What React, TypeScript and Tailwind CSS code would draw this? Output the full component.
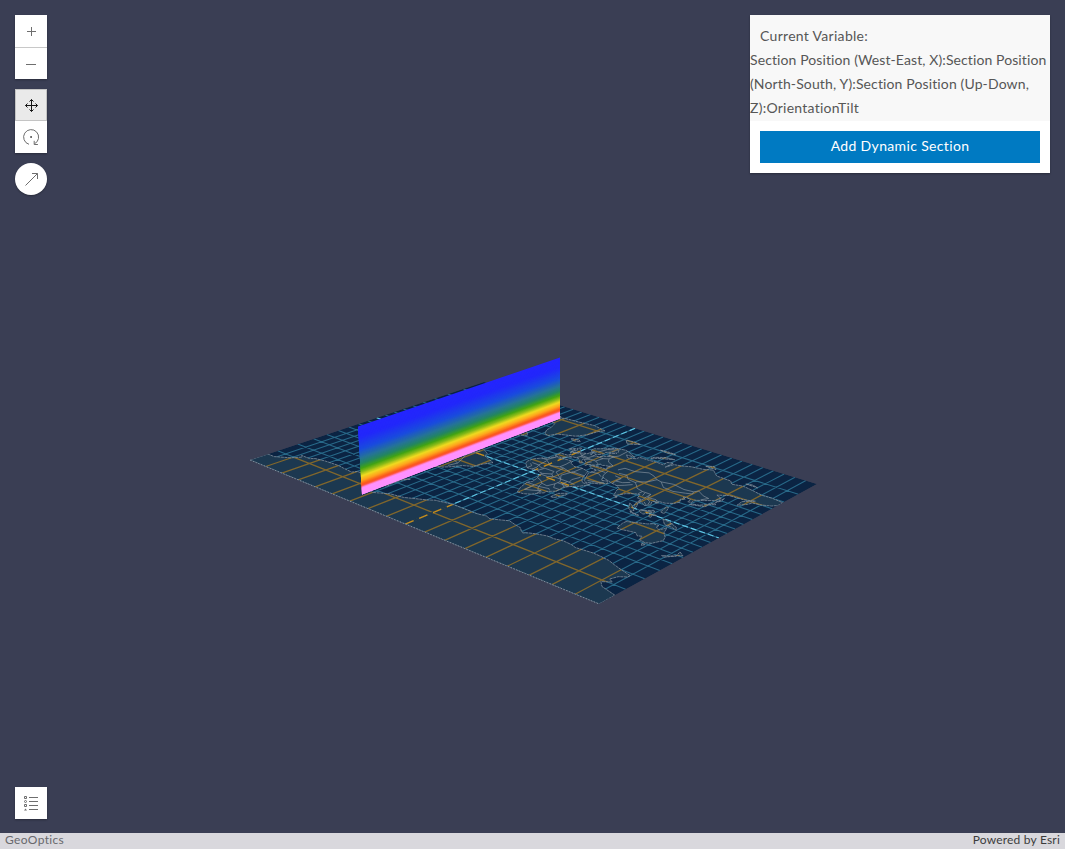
import type { ReactNode } from "react";

type Pt = [number, number];

// Scene corners of the ground plane: south-west, south-east, north-east, north-west.
const SW: Pt = [250, 460];
const SE: Pt = [599, 604];
const NE: Pt = [817, 484];
const NW: Pt = [484, 382];

const dx1 = SE[0] - NE[0];
const dx2 = NW[0] - NE[0];
const sx = SW[0] - SE[0] + NE[0] - NW[0];
const dy1 = SE[1] - NE[1];
const dy2 = NW[1] - NE[1];
const sy = SW[1] - SE[1] + NE[1] - NW[1];
const det = dx1 * dy2 - dx2 * dy1;
const g = (sx * dy2 - dx2 * sy) / det;
const h = (dx1 * sy - sx * dy1) / det;

function plane(s: number, t: number): Pt {
  const w = 1 + g * s + h * t;
  const x = SW[0] + (SE[0] - SW[0] + g * SE[0]) * s + (NW[0] - SW[0] + h * NW[0]) * t;
  const y = SW[1] + (SE[1] - SW[1] + g * SE[1]) * s + (NW[1] - SW[1] + h * NW[1]) * t;
  return [x / w, y / w];
}

// Miller cylindrical projection, then perspective.
function project(lon: number, lat: number): Pt {
  const y = 1.25 * Math.log(Math.tan(Math.PI / 4 + (0.4 * lat * Math.PI) / 180));
  return plane((lon + 180) / 360, 0.5 + y / 4.6068);
}

function path(coords: number[], close = true): string {
  const out: string[] = [];
  for (let i = 0; i < coords.length; i += 2) {
    const [x, y] = project(coords[i], coords[i + 1]);
    out.push(`${x.toFixed(1)} ${y.toFixed(1)}`);
  }
  return `M${out.join("L")}${close ? "Z" : ""}`;
}

const land: number[][] = [
  // Antarctica
  [-180, -90, -180, -84, -172, -84, -160, -81, -155, -78, -158, -77, -148, -77, -145, -75.5, -135, -74.5, -120, -74, -113, -74.5, -102, -75, -100, -73, -90, -73, -80, -73.5, -75, -72, -69, -70, -67, -67, -62, -65, -58, -63, -62, -67, -62, -72, -61, -75, -70, -77, -78, -79, -68, -81, -60, -82, -48, -79, -36, -78, -28, -76, -20, -74, -15, -72, -8, -71, 0, -70, 8, -70, 15, -70, 25, -70, 33, -69, 38, -70, 45, -68, 51, -66, 57, -67, 65, -68, 69, -70, 72, -71, 75, -69.5, 80, -68, 88, -66.5, 95, -66.5, 102, -65.5, 110, -66, 115, -67, 122, -66.5, 130, -66, 137, -66.3, 145, -67, 152, -68.5, 160, -70, 170, -71.5, 170, -73, 165, -75, 163, -78, 167, -79, 161, -81, 166, -83, 180, -84.5, 180, -90],
  // Africa
  [-17, 15, -16, 12, -13, 9, -8, 4.5, -3, 5, 2, 6, 6, 4, 9, 4, 9, 0, 12, -5, 13, -9, 14, -13, 12, -17, 15, -27, 18, -32, 19, -34.5, 25, -34, 30, -31, 33, -26, 35.5, -23, 35, -20, 40, -15, 40, -10, 39, -6, 42, -1, 47, 4, 51, 11.5, 44, 11, 40, 15, 37, 20, 35, 25, 32.5, 30, 29, 31, 24, 32, 20, 31, 19, 30.3, 15, 32, 11, 34, 10, 37, 3, 37, -2, 35, -6, 36, -9, 32, -10, 29, -13, 27, -17, 21],
  // Eurasia
  [-9, 37, -9, 43, -2, 43.5, -1, 46, -4.5, 48.5, 2, 51, 5, 53, 8, 54, 8, 57, 10.5, 57.5, 10, 54.5, 14, 54, 19, 54.5, 21, 57, 24, 58.5, 29, 60, 23, 60, 21, 62, 25, 65, 22, 66, 17, 62, 18, 60, 15, 56, 12.5, 56, 11, 59, 7, 58, 5, 60, 5, 62, 12, 66, 18, 70, 26, 71, 31, 70, 41, 67, 33, 66.5, 38, 64, 44, 66, 44, 68.5, 54, 68.5, 61, 69, 68, 68.5, 67, 72, 72, 73, 72, 67, 74, 72, 80, 73, 87, 75, 97, 76, 104, 78, 113, 74, 127, 73.5, 131, 71, 140, 72.5, 152, 71, 160, 69.7, 170, 70, 180, 69, 180, 65, 177, 62.5, 170, 60, 163, 59, 162, 56, 157, 51, 156, 57, 163, 62, 155, 59.5, 142, 59, 135, 55, 141, 53, 140, 48, 133, 43, 128, 40, 129, 35.5, 126, 35, 125, 39, 121, 40, 118, 39, 122, 37, 119, 35, 122, 31, 120, 26, 115, 22.5, 108, 21.5, 106, 18, 109, 13, 106, 9, 103, 11, 100, 13, 100, 9, 103, 4, 103.5, 1.4, 101, 3, 98.5, 8, 97.5, 16, 94, 16, 91, 22.5, 87, 21, 82, 16.5, 80, 12, 77.5, 8, 73, 17, 72, 21, 67, 24, 61, 25, 57, 26.5, 51, 28, 48, 30, 52, 24, 56.5, 26, 59.5, 22.5, 55, 17.5, 45, 13, 42.5, 15, 39, 21, 35, 28, 36, 36, 30, 36.5, 27, 38, 27, 40.5, 35, 42, 41, 41.5, 38, 45, 39, 47, 34, 46, 33, 45, 30, 46, 28, 42, 26, 41, 23, 40, 23, 37, 21, 38, 19, 42, 13, 45.5, 14, 42, 18, 40, 16, 38, 12, 42, 9, 44, 4, 43.5, 0, 40, -2, 37],
  // Australia
  [114, -22, 114, -26, 116, -34, 120, -34, 124, -33, 131, -31.5, 135, -34.5, 138, -33, 140, -38, 146, -39, 150, -37, 153.5, -29, 151, -24, 146, -19, 142.5, -11, 140.5, -17.5, 136, -15, 136, -12, 131, -12, 128, -15, 122, -18],
  // Greenland
  [-73, 78, -68, 76, -58, 75, -54, 70, -53, 66, -48, 61, -43, 60, -40, 65, -25, 69, -20, 74, -18, 80, -15, 82, -30, 83.5, -45, 82.5, -60, 82],
  // South America
  [-78, 8, -72, 12, -62, 10.5, -52, 5, -50, 0, -44, -2.5, -35, -6, -39, -14, -41, -22, -48, -26, -54, -34, -58, -38, -65, -41, -66, -47, -69, -53, -74, -50, -73, -38, -71, -30, -70, -18, -76, -14, -81, -5, -80, 1],
  // North America
  [-166, 60, -166, 68, -156, 71, -130, 70, -115, 69, -95, 72, -83, 69, -88, 65, -94, 60, -83, 55, -79, 52, -78, 61, -66, 59, -56, 52, -65, 46, -75, 39, -81, 30, -82, 26, -90, 30, -97, 27, -95, 18, -88, 21, -84, 12, -79, 9, -95, 15, -106, 22, -114, 30, -124, 40, -124, 48, -135, 58, -150, 60],
  [-90, 77, -90, 81, -70, 83, -64, 82, -75, 79, -80, 76],
  [-80, 73, -68, 70, -62, 66, -66, 63, -75, 66, -86, 70],
  // Islands
  [44, -25, 47, -25, 50, -15.5, 49, -12, 44, -17],
  [-5, 50, 1, 51, 1.5, 53, -2, 56, -4, 58.5, -6, 56, -3, 54, -5, 52],
  [-10, 52, -6, 52.5, -6, 55, -9, 54.5],
  [-24, 65, -18, 66.5, -14, 65, -19, 63.5, -22, 64],
  [95, 5.5, 100, 2.5, 106, -3, 105.5, -6, 101, -3],
  [105, -6.5, 114, -7.5, 114, -8.5, 106, -7.5],
  [109, 1, 113, 3, 117, 7, 119, 5, 117, 0, 115, -4, 110, -2],
  [119, 0, 124, 1, 121, -1, 123, -5, 120, -4],
  [131, -1, 138, -2, 147, -6, 150, -10, 144, -8, 138, -8],
  [120, 18, 122, 18, 124, 13, 126, 7, 122, 8],
  [130, 32, 131, 34, 136, 35.5, 140, 40, 142, 45, 145, 43, 141, 41, 141, 36, 135, 34],
  [142, 46, 143, 54, 144, 50],
  [145, -41, 148, -41, 147, -43.5],
  [173, -35, 178, -38, 174, -41.5, 171, -44, 167, -46, 170, -46.5, 175, -41],
  [12, 80, 18, 77, 27, 80, 20, 80.5],
  [52, 71, 56, 73, 68, 76.5, 60, 76, 53, 73],
  [95, 79, 100, 81, 105, 79],
  [139, 75, 150, 75, 144, 76],
  [80, 9, 81.5, 7, 80, 6],
  [108, 19, 111, 20, 110, 18],
  [47, 80.5, 55, 81, 62, 80.7, 55, 80],
];

const borders: number[][] = [
  [-13, 27, -8, 27, -5, 25, 3, 20, 10, 23, 14, 23, 24, 20, 24, 22, 37, 22],
  [-12, 15, -5, 15, 0, 12, 4, 13, 13, 13, 15, 8, 9, 4],
  [-8, 27, -6, 35], [9, 37, 10, 30, 10, 23], [25, 32, 25, 20],
  [14, 23, 15, 13, 20, 10, 27, 5, 34, 5, 42, 4], [24, 20, 22, 11, 27, 5], [36, 18, 34, 10, 36, 5],
  [15, 8, 19, 5, 27, 5, 30, 1, 30, -5, 28, -12, 22, -11, 17, -7, 12, -5],
  [9, 2, 16, 2, 19, 5], [30, -2, 41, -2], [34, 5, 34, -1, 39, -5], [30, -5, 34, -11, 40, -11],
  [22, -11, 24, -17, 33, -15, 35, -17], [12, -17, 24, -17, 28, -22, 32, -22], [20, -18, 20, -28, 26, -25, 31, -22, 32, -27],
  [-8, 4.5, -8, 10, -12, 13], [-3, 5, -3, 11, -5, 15], [2, 6, 3, 12], [-5, 15, -6, 25],
  [0, 43, 3, 42.5], [3, 51, 8, 49, 7, 44], [7, 53, 7, 49, 14, 49, 15, 54], [8, 47, 17, 48, 23, 48, 24, 54, 20, 54],
  [17, 48, 14, 45], [23, 48, 29, 45], [20, 42, 22, 45], [24, 54, 28, 56, 28, 60, 30, 63, 29, 70],
  [28, 56, 32, 52, 40, 49, 38, 47], [12, 60, 14, 66, 22, 69, 25, 66],
  [48, 46, 50, 51, 60, 51, 70, 55, 77, 53, 83, 50, 88, 49, 98, 51, 110, 49, 118, 50, 120, 53, 128, 49, 134, 48, 131, 43],
  [88, 49, 96, 43, 106, 42, 115, 45, 120, 47, 118, 50], [83, 50, 80, 43, 74, 39, 74, 37, 79, 33, 82, 30, 89, 28, 97, 28, 99, 22, 106, 23, 108, 21.5],
  [53, 42, 60, 43, 66, 38, 74, 37], [54, 37, 61, 36, 61, 30, 67, 31, 71, 35], [61, 30, 62, 25], [67, 24, 71, 28, 75, 33],
  [44, 40, 46, 33, 48, 30], [36, 37, 44, 37], [35, 31, 42, 32, 47, 29], [44, 17, 52, 19, 56, 22],
  [89, 28, 89, 23], [92, 27, 94, 22], [97, 28, 98, 18, 99, 10], [100, 20, 105, 17, 107, 12], [102, 14, 106, 11],
  [109, 1, 115, 2, 117, 4], [141, -2.5, 141, -9],
  [-60, 5, -63, -8, -58, -18, -55, -25, -57, -33], [-70, -18, -67, -24, -70, -40, -71, -52], [-63, -22, -55, -25],
];

const landPath = land.map((c) => path(c)).join("");
const borderPath = borders.map((c) => path(c, false)).join("");

function range(a: number, b: number, step: number): number[] {
  const out: number[] = [];
  for (let v = a; v <= b; v += step) out.push(v);
  return out;
}

const meridians = range(-170, 170, 10).map((lon) => path([lon, -90, lon, 90], false)).join("");
const wideMeridians = range(-160, 160, 20).map((lon) => path([lon, -90, lon, 90], false)).join("");
const parallels = range(-80, 80, 10).map((lat) => path([-180, lat, 180, lat], false)).join("");
const wideParallels = range(-80, 80, 20).map((lat) => path([-180, lat, 180, lat], false)).join("");
const axes = path([-180, 0, 180, 0], false) + path([0, -90, 0, 90], false);
const outline = path([-180, -90, 180, -90, 180, 90, -180, 90]);

const ramp: [number, number[]][] = [
  [0, [37, 37, 255]],
  [0.16, [34, 40, 250]],
  [0.34, [26, 76, 222]],
  [0.47, [38, 116, 150]],
  [0.55, [36, 134, 96]],
  [0.62, [66, 164, 20]],
  [0.67, [136, 186, 24]],
  [0.73, [240, 218, 32]],
  [0.79, [255, 166, 30]],
  [0.85, [250, 86, 28]],
  [0.875, [255, 86, 70]],
  [0.9, [255, 145, 255]],
  [1, [255, 145, 255]],
];

function rampColor(v: number): string {
  const i = Math.max(1, ramp.findIndex(([p]) => p >= v));
  const [p0, c0] = ramp[i - 1];
  const [p1, c1] = ramp[i];
  const k = (v - p0) / (p1 - p0);
  return `rgb(${c0.map((c, n) => Math.round(c + (c1[n] - c) * k)).join(",")})`;
}

const STRIPS = 80;

function Section() {
  const left = (k: number) => `${358 + 4 * k},${426.5 + 68 * k}`;
  const right = (k: number) => `560,${357.5 + 61 * k}`;
  return (
    <g>
      {Array.from({ length: STRIPS }, (_, i) => (
        <polygon
          key={i}
          points={`${left(i / STRIPS)} ${right(i / STRIPS)} ${right(Math.min(1, (i + 3) / STRIPS))} ${left(Math.min(1, (i + 3) / STRIPS))}`}
          fill={rampColor((i + 0.5) / STRIPS)}
        />
      ))}
    </g>
  );
}

function Scene() {
  return (
    <svg className="absolute inset-0" width="1065" height="833" viewBox="0 0 1065 833" fill="none">
      <defs>
        <clipPath id="land"><path d={landPath} /></clipPath>
        <clipPath id="ground"><path d={outline} /></clipPath>
      </defs>
      <g clipPath="url(#ground)">
        <path d={outline} fill="#0b2443" />
        <path d={meridians + parallels} stroke="#317f9f" strokeWidth="1.1" strokeOpacity="0.75" />
        <path d={axes} stroke="#5fc5e4" strokeWidth="1.1" strokeDasharray="6 3" />
        <path d={landPath} fill="#1c3850" />
        <g clipPath="url(#land)">
          <path d={wideMeridians + wideParallels} stroke="#8c6c28" strokeWidth="1.3" strokeOpacity="0.9" />
          <path d={axes} stroke="#1c3850" strokeWidth="1.8" />
          <path d={axes} stroke="#c68d1c" strokeWidth="1.3" strokeDasharray="9 6" />
        </g>
        <path d={landPath} stroke="#8793a0" strokeWidth="1" strokeOpacity="0.75" strokeDasharray="3 0.6" />
        <path d={borderPath} stroke="#8793a0" strokeWidth="0.9" strokeOpacity="0.75" />
      </g>
      <path d={path([-180, -90, 180, -90], false)} stroke="#8b9aa6" strokeWidth="0.8" strokeDasharray="1.5 1.5" />
      <Section />
    </svg>
  );
}

function Tool({ label, className = "bg-white text-[#6e6e6e]", children }: { label: string; className?: string; children: ReactNode }) {
  return (
    <button aria-label={label} className={`flex h-8 w-8 items-center justify-center ${className}`}>
      <svg className="shrink-0" width="32" height="32" viewBox="0 0 32 32" fill="none" stroke="currentColor">{children}</svg>
    </button>
  );
}

export default function App() {
  return (
    <div className="relative flex h-[849px] w-[1065px] flex-col overflow-hidden bg-[#3a3e54] font-[Lato,sans-serif] text-[#565656]">
      <Scene />
      <main className="relative flex flex-1 items-stretch justify-between p-[15px]">
        <nav className="flex flex-col">
          <div className="mb-2.5 shadow-[0_1px_2px_rgba(0,0,0,0.3)]">
            <Tool label="Zoom in">
              <path d="M12 16.5h9M16.5 12v9" />
            </Tool>
            <Tool label="Zoom out">
              <path d="M0 0.5h32" stroke="#c8c8c8" />
              <path d="M11 17.5h10" />
            </Tool>
          </div>
          <div className="mb-2.5 shadow-[0_1px_2px_rgba(0,0,0,0.3)]">
            <Tool label="Pan" className="bg-[#eaeaea] text-[#151515] outline outline-1 -outline-offset-1 outline-[#c4c4c4]">
              <path d="M10.5 16.5h12M16.5 10.5v12M14.5 12.5l2-2 2 2M14.5 20.5l2 2 2-2M12.5 14.5l-2 2 2 2M20.5 14.5l2 2-2 2" />
            </Tool>
            <Tool label="Rotate">
              <path d="M14 23.3A7.5 7.5 0 1 1 19.5 22.8M19.2 19.8v3.7h3.7" />
              <path d="M15.2 16h1.8" strokeWidth="1.8" />
            </Tool>
          </div>
          <Tool label="Compass" className="rounded-full bg-white text-[#6e6e6e] shadow-[0_1px_2px_rgba(0,0,0,0.3)]">
            <path d="M10.5 22.5L22.5 10.5M17 10.5h5.5v5.5" />
          </Tool>
          <Tool label="Legend" className="mt-auto mb-[-1px] bg-white text-[#6e6e6e] shadow-[0_1px_2px_rgba(0,0,0,0.3)]">
            <path d="M14 10.5h9M14 14.5h9M14 18.5h9M14 22.5h9" />
            <path d="M9.5 9.5h2v2h-2zM9.5 17.5h2v2h-2z" />
            <circle cx="10.5" cy="14.5" r="1" />
            <path d="M9 23.5h3l-1.5-2z" fill="currentColor" stroke="none" />
          </Tool>
        </nav>
        <aside className="w-[300px] self-start bg-white shadow-[0_1px_2px_rgba(0,0,0,0.3)]">
          <div className="h-[106px] whitespace-nowrap bg-[#f8f8f8] pt-[9px] text-sm leading-6">
            <div className="pl-2.5 tracking-[0.3px]">Current Variable:</div>
            <div className="tracking-[0.1px]">Section Position (West-East, X):Section Position</div>
            <div className="tracking-[0.13px]">(North-South, Y):Section Position (Up-Down,</div>
            <div className="tracking-[0.25px]">Z):OrientationTilt</div>
          </div>
          <div className="p-2.5">
            <button className="block h-8 w-full bg-[#007ac2] pb-0.5 text-sm tracking-[0.35px] text-white">Add Dynamic Section</button>
          </div>
        </aside>
      </main>
      <footer className="relative flex h-4 items-center justify-between bg-[#d9d8dd] px-[5px] pb-0.5 text-xs leading-[14px]">
        <span className="tracking-[0.35px] text-[#68686c]">GeoOptics</span>
        <span className="tracking-[0.2px] text-[#3c3c3c]">Powered by Esri</span>
      </footer>
    </div>
  );
}
